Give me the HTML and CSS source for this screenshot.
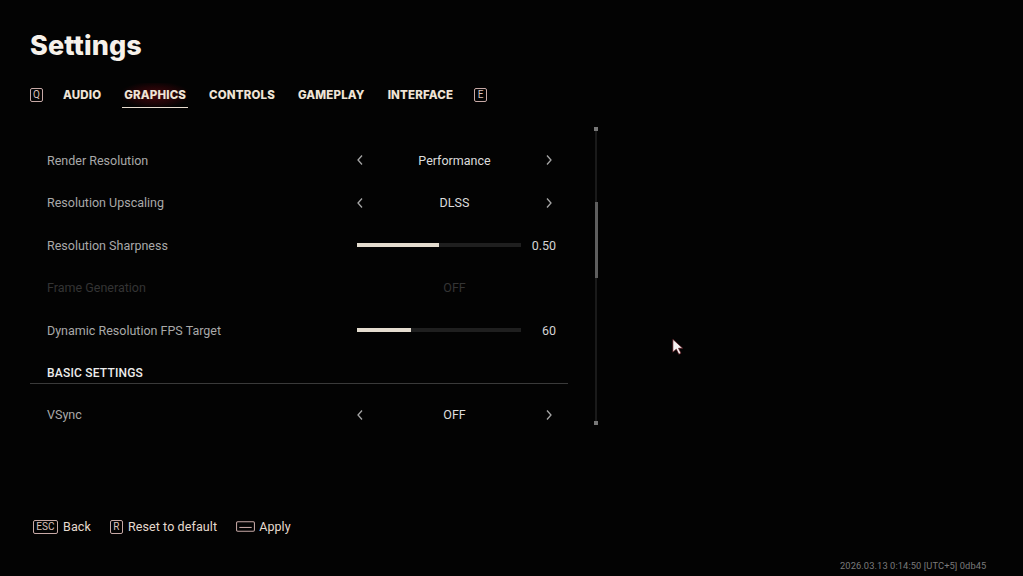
FILE: index.html
```html
<!DOCTYPE html>
<html>
<head>
<meta charset="utf-8">
<link rel="stylesheet" href="styles.css">
</head>
<body>
<div class="screen">
  <header class="head">
    <h1 class="title">Settings</h1>
    <nav class="tabs">
      <span class="key key-q">Q</span>
      <span class="tab">AUDIO</span>
      <span class="tab active">GRAPHICS</span>
      <span class="tab">CONTROLS</span>
      <span class="tab">GAMEPLAY</span>
      <span class="tab">INTERFACE</span>
      <span class="key key-e">E</span>
    </nav>
  </header>

  <main class="body">
    <section class="list">
      <div class="row">
        <span class="label">Render Resolution</span>
        <div class="selector">
          <svg class="chev" viewBox="0 0 8 12"><path d="M6 1.5 L2 6 L6 10.5"/></svg>
          <span class="val">Performance</span>
          <svg class="chev" viewBox="0 0 8 12"><path d="M2 1.5 L6 6 L2 10.5"/></svg>
        </div>
      </div>
      <div class="row">
        <span class="label">Resolution Upscaling</span>
        <div class="selector">
          <svg class="chev" viewBox="0 0 8 12"><path d="M6 1.5 L2 6 L6 10.5"/></svg>
          <span class="val">DLSS</span>
          <svg class="chev" viewBox="0 0 8 12"><path d="M2 1.5 L6 6 L2 10.5"/></svg>
        </div>
      </div>
      <div class="row">
        <span class="label">Resolution Sharpness</span>
        <div class="slider">
          <div class="track"><div class="fill" style="width:50%"></div></div>
          <span class="num">0.50</span>
        </div>
      </div>
      <div class="row disabled">
        <span class="label">Frame Generation</span>
        <div class="selector">
          <span class="val">OFF</span>
        </div>
      </div>
      <div class="row">
        <span class="label">Dynamic Resolution FPS Target</span>
        <div class="slider">
          <div class="track"><div class="fill" style="width:33%"></div></div>
          <span class="num">60</span>
        </div>
      </div>
      <div class="row section">
        <span class="section-title">BASIC SETTINGS</span>
      </div>
      <div class="row after-section">
        <span class="label">VSync</span>
        <div class="selector">
          <svg class="chev" viewBox="0 0 8 12"><path d="M6 1.5 L2 6 L6 10.5"/></svg>
          <span class="val">OFF</span>
          <svg class="chev" viewBox="0 0 8 12"><path d="M2 1.5 L6 6 L2 10.5"/></svg>
        </div>
      </div>
    </section>
    <div class="scrollbar">
      <span class="cap"></span>
      <div class="rail"><div class="thumb"></div></div>
      <span class="cap"></span>
    </div>
  </main>

  <footer class="foot">
    <div class="hints">
      <span class="hint"><span class="key key-esc">ESC</span>Back</span>
      <span class="hint"><span class="key key-r">R</span>Reset to default</span>
      <span class="hint"><svg class="space" viewBox="0 0 20 11"><rect x="0.6" y="0.6" width="18.8" height="9.8" rx="1.2"/><path d="M3.5 6.5 H16.5"/></svg>Apply</span>
    </div>
    <div class="stamp">2026.03.13 0:14:50 [UTC+5] 0db45</div>
  </footer>

  <svg class="cursor" viewBox="0 0 14 20"><path d="M1 1 L1 16 L5 12.5 L8 18.5 L10.5 17.3 L7.6 11.5 L12.5 11.5 Z" fill="#f4f0f0" stroke="#5a1018" stroke-width="0.8"/></svg>
</div>
</body>
</html>
```

FILE: styles.css
```css
* { box-sizing: border-box; }
html, body { margin: 0; padding: 0; background: #000; }
.screen {
  position: relative;
  width: 1023px;
  height: 576px;
  background: #030303;
  overflow: hidden;
  display: flex;
  flex-direction: column;
  font-family: "Roboto", "Liberation Sans", sans-serif;
}
.head { padding: 30px 0 0 30px; }
.title {
  margin: 0;
  font-family: "Inter", "DejaVu Sans", sans-serif;
  font-weight: 800;
  font-size: 27px;
  line-height: 32px;
  color: #f6f1ea;
  letter-spacing: 0.1px;
}
.tabs {
  display: flex;
  align-items: center;
  margin-top: 21px;
  height: 24px;
}
.key {
  display: inline-flex;
  align-items: center;
  justify-content: center;
  border: 1px solid #c7a9a6;
  border-radius: 2px;
  color: #d9c0bb;
  font-family: "Roboto", sans-serif;
  font-size: 10px;
  line-height: 1;
  height: 14px;
}
.key-q { width: 13px; margin-right: 19px; }
.key-e { width: 13px; margin-left: 20px; }
.tab {
  position: relative;
  font-family: "Inter", "DejaVu Sans", sans-serif;
  font-weight: 800;
  font-size: 11.5px;
  letter-spacing: 0.15px;
  color: #efe4d6;
  padding: 5px 1px;
  margin-right: 21px;
}
.tab:nth-child(6) { margin-right: 0; }
.tab.active {
  background: radial-gradient(ellipse at center, rgba(120,10,20,0.55) 0%, rgba(80,5,12,0.35) 50%, rgba(0,0,0,0) 80%);
}
.tab.active::after {
  content: "";
  position: absolute;
  left: -1px;
  right: -1px;
  bottom: -1px;
  height: 1.5px;
  background: #e9ddd0;
}
.body {
  display: flex;
  align-items: flex-start;
  margin-top: 20px;
  padding-left: 30px;
}
.list {
  width: 538px;
  margin-top: 12px;
  display: flex;
  flex-direction: column;
}
.row {
  display: flex;
  align-items: center;
  height: 42.5px;
  padding-left: 17px;
  font-size: 12.5px;
  letter-spacing: 0;
}
.label { flex: 1; color: #a9a9a9; }
.selector {
  width: 197px;
  margin-left: 0;
  margin-right: 15px;
  display: flex;
  align-items: center;
  justify-content: space-between;
}
.disabled .selector { justify-content: center; }
.chev { width: 8px; height: 12px; }
.chev path { fill: none; stroke: #a6a6a6; stroke-width: 1.3; }
.val { color: #dcdcdc; flex: 1; text-align: center; }
.disabled .label, .disabled .val { color: #343434; }
.slider {
  width: 200px;
  margin-right: 12px;
  display: flex;
  align-items: center;
}
.track {
  width: 164px;
  height: 4px;
  background: #1f1f1f;
  margin-left: 1px;
}
.fill { height: 100%; background: #e4dccf; }
.num { flex: 1; text-align: right; color: #d4d4d4; }
.section {
  border-bottom: 1px solid #3a3a3a;
  height: 32px;
  align-items: flex-start;
  padding-top: 14px;
}
.section-title { color: #ededed; font-weight: 500; font-size: 12px; letter-spacing: 0.2px; line-height: 14px; }
.after-section { margin-top: 10px; }
.scrollbar {
  margin-left: 26px;
  width: 4px;
  height: 298px;
  display: flex;
  flex-direction: column;
  align-items: center;
}
.cap { width: 4px; height: 4px; background: #777; }
.rail {
  flex: 1;
  width: 2px;
  background: #1a1a1a;
  padding-top: 71px;
}
.thumb { width: 3px; margin-left: -0.5px; height: 76px; background: #5e5e5e; }
.foot {
  margin-top: auto;
  padding: 0 0 4px 33px;
}
.hints {
  display: flex;
  align-items: center;
  gap: 19px;
  color: #e6dbcf;
  font-size: 12.5px;
  letter-spacing: 0.1px;
}
.hint { display: inline-flex; align-items: center; }
.hint .key { margin-right: 5px; }
.key-esc { width: 25px; font-size: 10px; }
.key-r { width: 13px; }
.space { width: 19px; height: 11px; margin-right: 4px; }
.space rect, .space path { fill: none; stroke: #c7a9a6; stroke-width: 1.1; }
.stamp {
  margin-top: 26px;
  padding-left: 807px;
  font-size: 9.3px;
  color: #7a7a7a;
  letter-spacing: 0.1px;
  line-height: 12px;
}
.cursor {
  position: absolute;
  left: 672px;
  top: 338px;
  width: 12px;
  height: 18px;
}
```
